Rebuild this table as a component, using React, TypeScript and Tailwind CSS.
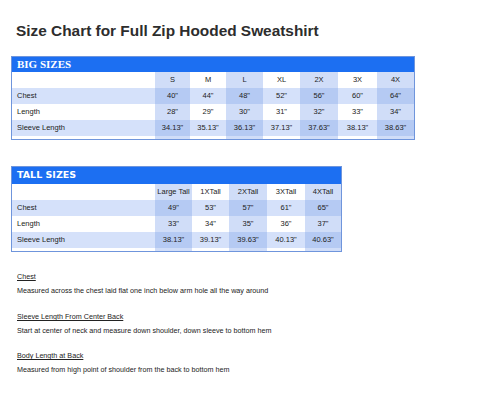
type Col = { label: string; band: boolean };

const bigCols: Col[] = [
  { label: "S", band: true },
  { label: "M", band: false },
  { label: "L", band: true },
  { label: "XL", band: false },
  { label: "2X", band: true },
  { label: "3X", band: false },
  { label: "4X", band: true },
];

const bigRows = [
  { name: "Chest", vals: ['40"', '44"', '48"', '52"', '56"', '60"', '64"'] },
  { name: "Length", vals: ['28"', '29"', '30"', '31"', '32"', '33"', '34"'] },
  { name: "Sleeve Length", vals: ['34.13"', '35.13"', '36.13"', '37.13"', '37.63"', '38.13"', '38.63"'] },
];

const tallCols: Col[] = [
  { label: "Large Tall", band: true },
  { label: "1XTall", band: false },
  { label: "2XTall", band: true },
  { label: "3XTall", band: false },
  { label: "4XTall", band: true },
];

const tallRows = [
  { name: "Chest", vals: ['49"', '53"', '57"', '61"', '65"'] },
  { name: "Length", vals: ['33"', '34"', '35"', '36"', '37"'] },
  { name: "Sleeve Length", vals: ['38.13"', '39.13"', '39.63"', '40.13"', '40.63"'] },
];

// cell colour from row band + column band
function cellBg(rowBand: boolean, colBand: boolean) {
  if (rowBand && colBand) return "bg-[#b5caf3]";
  if (rowBand) return "bg-[#d5e1fa]";
  if (colBand) return "bg-[#d0ddf8]";
  return "bg-white";
}

function SizeTable({
  title,
  titleClass,
  headH,
  gridClass,
  cols,
  rows,
  widthClass,
}: {
  title: string;
  titleClass: string;
  headH: string;
  gridClass: string;
  cols: Col[];
  rows: { name: string; vals: string[] }[];
  widthClass: string;
}) {
  return (
    <div className={`${widthClass} ml-[11px] border border-[#6f95dc] bg-white`}>
      <div className={`${headH} bg-[#1c6ff2] flex items-center pl-[5px] text-white ${titleClass}`}>
        {title}
      </div>
      <div className={`grid ${gridClass} text-[7.5px] text-[#222] leading-[16px]`}>
        <div className="h-[16px] bg-white"></div>
        {cols.map((c) => (
          <div key={c.label} className={`h-[16px] text-center ${cellBg(false, c.band)}`}>
            {c.label}
          </div>
        ))}
        {rows.map((r, i) => {
          const rb = i !== 1;
          return (
            <>
              <div key={r.name} className={`h-[16px] pl-[5px] ${cellBg(rb, false)}`}>
                {r.name}
              </div>
              {r.vals.map((v, j) => (
                <div key={r.name + j} className={`h-[16px] text-center ${cellBg(rb, cols[j].band)}`}>
                  {v}
                </div>
              ))}
            </>
          );
        })}
        <div className="h-[3px] bg-white"></div>
        {cols.map((c) => (
          <div key={"pad" + c.label} className={`h-[3px] ${cellBg(false, c.band)}`}></div>
        ))}
      </div>
    </div>
  );
}

function Note({ head, text, className }: { head: string; text: string; className: string }) {
  return (
    <div className={`ml-[17px] ${className}`}>
      <div className="h-[14px] leading-[14px] underline">{head}</div>
      <div className="h-[14px] leading-[14px]">{text}</div>
    </div>
  );
}

export default function App() {
  return (
    <div className="w-[500px] h-[400px] bg-white overflow-hidden font-['Liberation_Sans',Arial,sans-serif]">
      <div className="mt-[22px] ml-[16px] h-[18px] leading-[18px] text-[15.4px] font-bold text-[#2d2d2d]">
        Size Chart for Full Zip Hooded Sweatshirt
      </div>

      <div className="mt-[16px]">
        <SizeTable
          title="BIG SIZES"
          titleClass="font-['Liberation_Serif',serif] font-bold text-[11px]"
          headH="h-[15px]"
          widthClass="w-[404px]"
          gridClass="grid-cols-[143px_35px_36px_37px_37px_38px_39px_37px]"
          cols={bigCols}
          rows={bigRows}
        />
      </div>

      <div className="mt-[26px]">
        <SizeTable
          title="TALL SIZES"
          titleClass="font-['DejaVu_Sans',sans-serif] font-bold text-[9.5px]"
          headH="h-[17px]"
          widthClass="w-[331px]"
          gridClass="grid-cols-[143px_37px_37px_38px_38px_36px]"
          cols={tallCols}
          rows={tallRows}
        />
      </div>

      <div className="text-[7.2px] text-[#222]">
        <Note
          className="mt-[18px]"
          head="Chest"
          text="Measured across the chest laid flat one inch below arm hole all the way around"
        />
        <Note
          className="mt-[12px]"
          head="Sleeve Length From Center Back"
          text="Start at center of neck and measure down shoulder, down sleeve to bottom hem"
        />
        <Note
          className="mt-[11px]"
          head="Body Length at Back"
          text="Measured from high point of shoulder from the back to bottom hem"
        />
      </div>
    </div>
  );
}
